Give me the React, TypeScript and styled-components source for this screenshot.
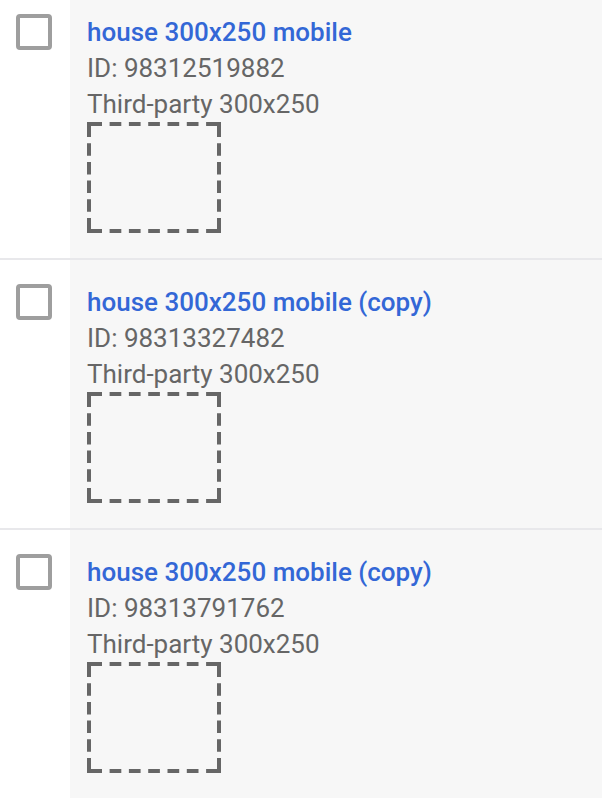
import React from "react"
import styled, { createGlobalStyle } from "styled-components"

const GlobalStyle = createGlobalStyle`
  html, body {
    margin: 0;
    padding: 0;
    background: #fff;
    font-family: Roboto, "Liberation Sans", Arial, sans-serif;
  }
`

const List = styled.div`
  display: flex;
  flex-direction: column;
  width: 602px;
  height: 798px;
  overflow: hidden;
`

const Row = styled.div<{ first?: boolean }>`
  display: flex;
  flex-shrink: 0;
  border-bottom: 2px solid #e8e8eb;
  margin-top: ${(props) => (props.first ? "-10px" : "0")};
`

const SelectCell = styled.div`
  width: 70px;
  flex-shrink: 0;
  box-sizing: border-box;
  padding: 24px 0 0 16px;
  background: #fff;
`

const Checkbox = styled.div`
  width: 36px;
  height: 36px;
  box-sizing: border-box;
  border: 4px solid #9e9e9e;
  border-radius: 4px;
  background: #fff;
`

const InfoCell = styled.div`
  flex: 1;
  display: flex;
  flex-direction: column;
  align-items: flex-start;
  padding: 24px 0 25px 17px;
  background: #f7f7f7;
`

const Title = styled.a`
  font-size: 26px;
  line-height: 36px;
  font-weight: 500;
  color: #3367d6;
  text-decoration: none;
`

const Meta = styled.div`
  font-size: 26px;
  line-height: 36px;
  color: #666;
`

const Placeholder = styled.svg`
  display: block;
  width: 134px;
  height: 111px;
`

// dash patterns so the corners come out as full L shapes
const H_DASH = "15 7.6 11.7 7.6 11.7 7.6 11.7 7.6 11.7 7.6 11.7 7.6 15"
const V_DASH = "15 6.2 12.5 6.2 12.5 6.2 12.5 6.2 12.5 6.2 15"

function PreviewBox() {
  return (
    <Placeholder viewBox="0 0 134 111">
      <g stroke="#666" strokeWidth={4} fill="none">
        <line x1={0} y1={2} x2={134} y2={2} strokeDasharray={H_DASH} />
        <line x1={0} y1={109} x2={134} y2={109} strokeDasharray={H_DASH} />
        <line x1={2} y1={0} x2={2} y2={111} strokeDasharray={V_DASH} />
        <line x1={132} y1={0} x2={132} y2={111} strokeDasharray={V_DASH} />
      </g>
    </Placeholder>
  )
}

const creatives = [
  { name: "house 300x250 mobile", id: "98312519882" },
  { name: "house 300x250 mobile (copy)", id: "98313327482" },
  { name: "house 300x250 mobile (copy)", id: "98313791762" },
]

export default function App() {
  return (
    <>
      <GlobalStyle />
      <List>
        {creatives.map((c, i) => (
          <Row key={c.id} first={i === 0}>
            <SelectCell>
              <Checkbox />
            </SelectCell>
            <InfoCell>
              <Title href="#">{c.name}</Title>
              <Meta>ID: {c.id}</Meta>
              <Meta>Third-party 300x250</Meta>
              <PreviewBox />
            </InfoCell>
          </Row>
        ))}
      </List>
    </>
  )
}
